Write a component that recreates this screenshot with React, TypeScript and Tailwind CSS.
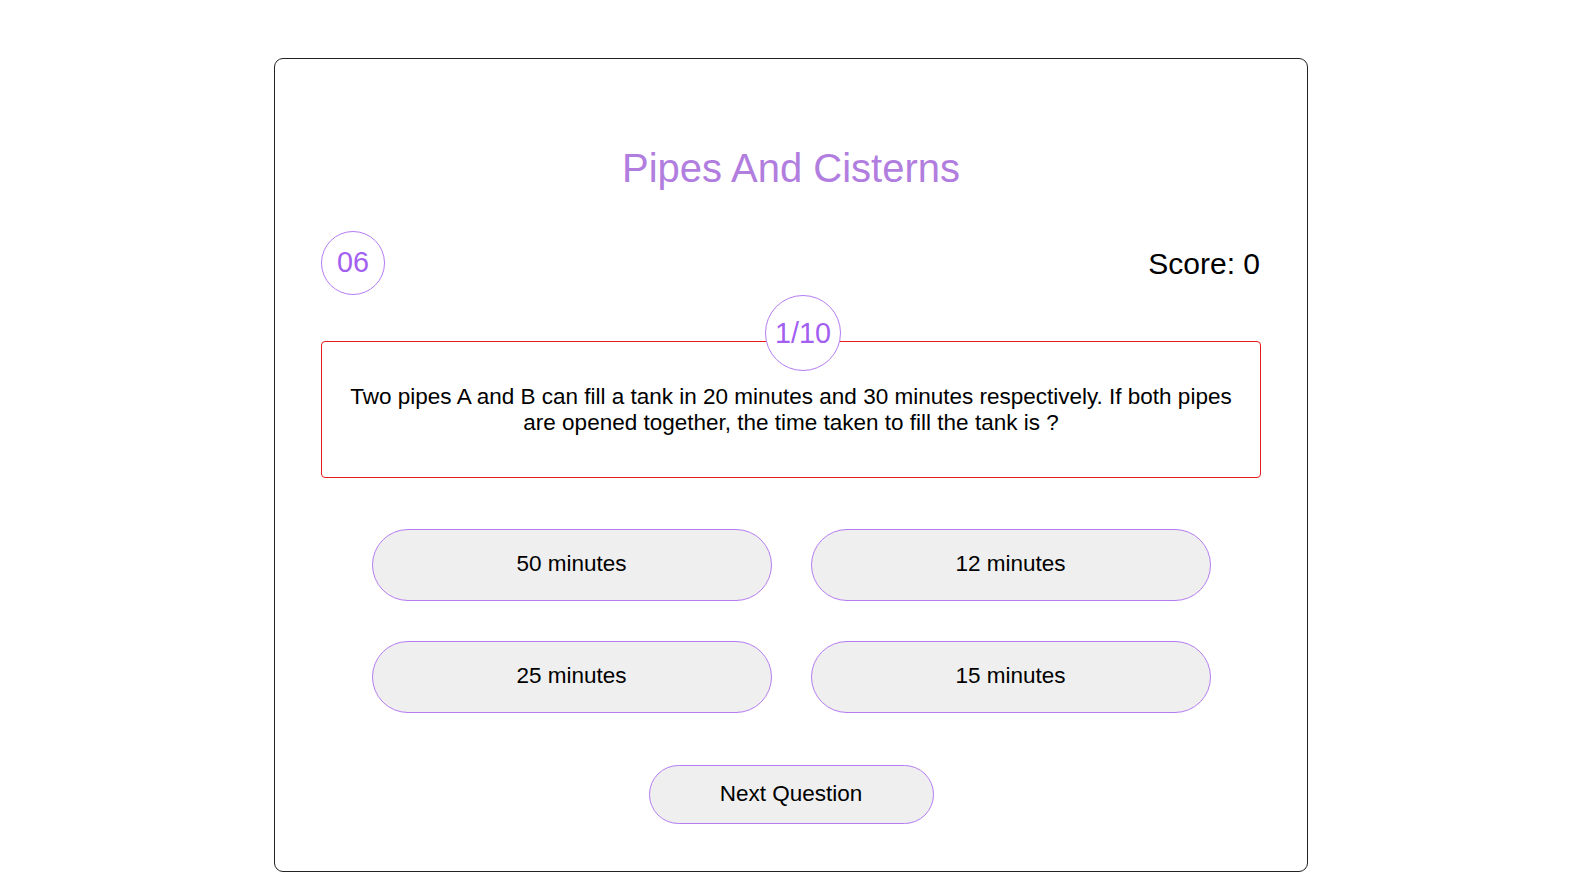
import React from "react";

const options = ["50 minutes", "12 minutes", "25 minutes", "15 minutes"];

const App = () => {
  return (
    <div className="min-h-[896px] bg-white pt-[58px] pb-[25px] font-['Liberation_Sans',Arial,sans-serif]">
      <div className="relative ml-[274px] w-[1034px] rounded-[9px] border border-[#222] px-[46px] pt-[86px] pb-[47px]">
        <h1 className="text-center text-[40px] leading-[46px] text-[#b17ee0]">
          Pipes And Cisterns
        </h1>

        <div className="mt-[40px] flex items-center justify-between">
          <div className="flex h-[64px] w-[64px] items-center justify-center rounded-full border border-[#b57cf2] text-[28.8px] text-[#a35ff0]">
            06
          </div>
          <div className="pr-[1px] text-[30px] text-black">Score: 0</div>
        </div>

        <div className="relative mt-[46px] rounded-[4px] border border-[#e61b1b] px-[20px] pt-[42px] pb-[41px]">
          <div className="absolute top-[-47px] left-[443px] flex h-[76px] w-[76px] items-center justify-center rounded-full border border-[#b57cf2] bg-white pt-[1px] text-[28.8px] text-[#a35ff0]">
            1/10
          </div>
          <p className="text-center text-[22.5px] leading-[26px] text-black">
            Two pipes A and B can fill a tank in 20 minutes and 30 minutes respectively. If both pipes are opened together, the time taken to fill the tank is ?
          </p>
        </div>

        <div className="mt-[51px] grid grid-cols-[400px_400px] justify-center gap-x-[39px] gap-y-[40px]">
          {options.map((opt) => (
            <button
              key={opt}
              className="h-[72px] rounded-full border border-[#b57cf2] bg-[#efefef] pb-[2px] text-[22.5px] text-black"
            >
              {opt}
            </button>
          ))}
        </div>

        <div className="mt-[52px] flex justify-center">
          <button className="h-[59px] w-[285px] rounded-full border border-[#b57cf2] bg-[#efefef] pb-[2px] text-[22.5px] text-black">
            Next Question
          </button>
        </div>
      </div>
    </div>
  );
};

export default App;
